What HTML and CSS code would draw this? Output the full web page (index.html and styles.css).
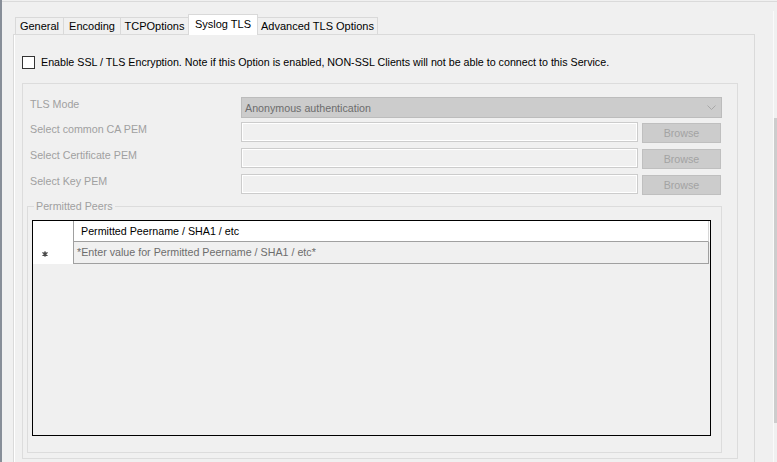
FILE: index.html
```html
<!DOCTYPE html>
<html>
<head>
<meta charset="utf-8">
<link rel="stylesheet" href="styles.css">
</head>
<body>
<div class="frame">
  <div class="leftbar"></div>
  <div class="main">
    <div class="client">
      <div class="tabs">
        <div class="tab w-general">General</div>
        <div class="tab w-encoding">Encoding</div>
        <div class="tab w-tcp">TCPOptions</div>
        <div class="tab w-syslog selected">Syslog TLS</div>
        <div class="tab w-adv">Advanced TLS Options</div>
      </div>
      <div class="panel">
        <div class="check-row">
          <span class="checkbox"></span>
          <span class="check-label">Enable SSL / TLS Encryption. Note if this Option is enabled, NON-SSL Clients will not be able to connect to this Service.</span>
        </div>
        <div class="group">
          <div class="row row-first">
            <div class="label">TLS Mode</div>
            <div class="combo">
              <span class="combo-text">Anonymous authentication</span>
              <svg class="chev" width="9" height="5" viewBox="0 0 9 5"><path d="M0.5 0.5 L4.5 4.5 L8.5 0.5" fill="none" stroke="#a8a8a8" stroke-width="1"/></svg>
            </div>
          </div>
          <div class="row row-second">
            <div class="label">Select common CA PEM</div>
            <div class="textbox"></div>
            <div class="button">Browse</div>
          </div>
          <div class="row">
            <div class="label">Select Certificate PEM</div>
            <div class="textbox"></div>
            <div class="button">Browse</div>
          </div>
          <div class="row">
            <div class="label">Select Key PEM</div>
            <div class="textbox"></div>
            <div class="button">Browse</div>
          </div>
          <fieldset class="peers">
            <legend>Permitted Peers</legend>
            <div class="grid">
              <div class="grid-head">
                <div class="rowhead-corner"></div>
                <div class="colhead">Permitted Peername / SHA1 / etc</div>
              </div>
              <div class="grid-row">
                <div class="rowhead">
                  <svg width="6" height="6" viewBox="0 0 6 6"><path d="M3 0.2 V5.8 M0.4 1.5 L5.6 4.5 M0.4 4.5 L5.6 1.5" stroke="#4a4a4a" stroke-width="1.2"/><circle cx="3" cy="3" r="1.7" fill="#4a4a4a"/></svg>
                </div>
                <div class="cell">*Enter value for Permitted Peername / SHA1 / etc*</div>
              </div>
            </div>
          </fieldset>
        </div>
      </div>
    </div>
    <div class="vscroll">
      <div class="thumb"></div>
    </div>
  </div>
</div>
</body>
</html>
```
FILE: styles.css
```css
* { box-sizing: border-box; }
html, body {
  margin: 0;
  padding: 0;
  background: #f0f0f0;
}
body {
  font-family: "Liberation Sans", Arial, sans-serif;
  font-size: 10.7px;
  color: #000;
}
.frame {
  display: flex;
  width: 777px;
  height: 462px;
  overflow: hidden;
}
.leftbar {
  flex: none;
  width: 2px;
  background: #878e98;
}
.main {
  flex: none;
  width: 775px;
  display: flex;
  margin-top: 1px;
  border-top: 1px solid #dadada;
}
.client {
  flex: none;
  width: 771px;
  padding: 12px 0 0 11px;
}
.tabs {
  display: flex;
  align-items: flex-end;
  height: 20px;
  margin-left: 2px;
  position: relative;
  z-index: 1;
}
.tab {
  height: 17px;
  line-height: 16px;
  border: 1px solid #d9d9d9;
  border-bottom: none;
  margin-right: -1px;
  text-align: center;
  background: #f0f0f0;
  white-space: nowrap;
  font-size: 11px;
}
.tab.selected {
  height: 21px;
  line-height: 19px;
  margin-bottom: -1px;
  background: #fff;
  position: relative;
  z-index: 2;
}
.w-general { width: 49px; }
.w-encoding { width: 58px; }
.w-tcp { width: 69px; }
.w-syslog { width: 70px; }
.w-adv { width: 121px; }
.panel {
  width: 742px;
  height: 440px;
  border: 1px solid #dadada;
  border-bottom: none;
  box-shadow: inset 1px 0 #fff;
  padding: 21px 0 0 8px;
}
.check-row {
  display: flex;
  align-items: center;
  height: 13px;
}
.checkbox {
  flex: none;
  width: 13px;
  height: 13px;
  border: 1px solid #333;
  background: #fff;
}
.check-label {
  margin-left: 6px;
  white-space: nowrap;
  line-height: 13px;
}
.group {
  margin-top: 14px;
  width: 716px;
  height: 376px;
  border: 1px solid #dcdcdc;
  padding: 0 15px 0 4px;
}
.row {
  display: flex;
  align-items: flex-start;
  height: 20px;
  margin-top: 6px;
  padding-left: 3px;
}
.row-first {
  height: 21px;
  margin-top: 13px;
}
.row-second {
  margin-top: 4px;
}
.label {
  flex: none;
  width: 211px;
  color: #a0a0a0;
  line-height: 14px;
}
.combo {
  flex: none;
  width: 481px;
  height: 21px;
  background: #cccccc;
  border: 1px solid #bcbcbc;
  display: flex;
  align-items: center;
  justify-content: space-between;
  padding: 0 5px 0 3px;
}
.combo-text {
  color: #6d6d6d;
}
.chev {
  display: block;
}
.textbox {
  flex: none;
  width: 397px;
  height: 20px;
  border: 1px solid #cccccc;
  box-shadow: inset 0 0 0 1px #fff;
  background: #f0f0f0;
}
.button {
  flex: none;
  width: 79px;
  height: 20px;
  margin-left: 4px;
  margin-top: 1px;
  background: #cccccc;
  border: 1px solid #bfbfbf;
  color: #a3a3a3;
  text-align: center;
  line-height: 18px;
}
.peers {
  margin: 6px 0 0 0;
  width: 695px;
  height: 253px;
  border: 1px solid #dcdcdc;
  padding: 0 10px 17px 4px;
}
.peers legend {
  color: #a0a0a0;
  padding: 0 2px;
  margin-left: 2px;
  line-height: 13px;
}
.grid {
  margin-top: 7px;
  width: 679px;
  height: 216px;
  border: 1px solid #000;
  background: #f0f0f0;
}
.grid-head {
  display: flex;
  height: 21px;
  background: #fff;
}
.rowhead-corner {
  flex: none;
  width: 40px;
}
.colhead {
  flex: none;
  width: 636px;
  border-left: 1px solid #a0a0a0;
  border-right: 1px solid #d6d6d6;
  border-bottom: 1px solid #a0a0a0;
  padding-left: 7px;
  line-height: 20px;
}
.grid-row {
  display: flex;
  height: 22px;
}
.rowhead {
  flex: none;
  width: 40px;
  background: #fff;
  display: flex;
  align-items: center;
  padding-left: 9px;
  padding-top: 1px;
}
.rowhead svg { display: block; }
.cell {
  flex: none;
  width: 636px;
  border-left: 1px solid #a0a0a0;
  border-right: 1px solid #a0a0a0;
  border-bottom: 1px solid #a0a0a0;
  padding-left: 3px;
  color: #6d6d6d;
  line-height: 20px;
  background: #f0f0f0;
}
.vscroll {
  flex: none;
  width: 4px;
  margin-top: 9px;
  border-left: 1px solid #fafafa;
}
.thumb {
  margin-top: 107px;
  height: 305px;
  background: #cdcdcd;
}
```
